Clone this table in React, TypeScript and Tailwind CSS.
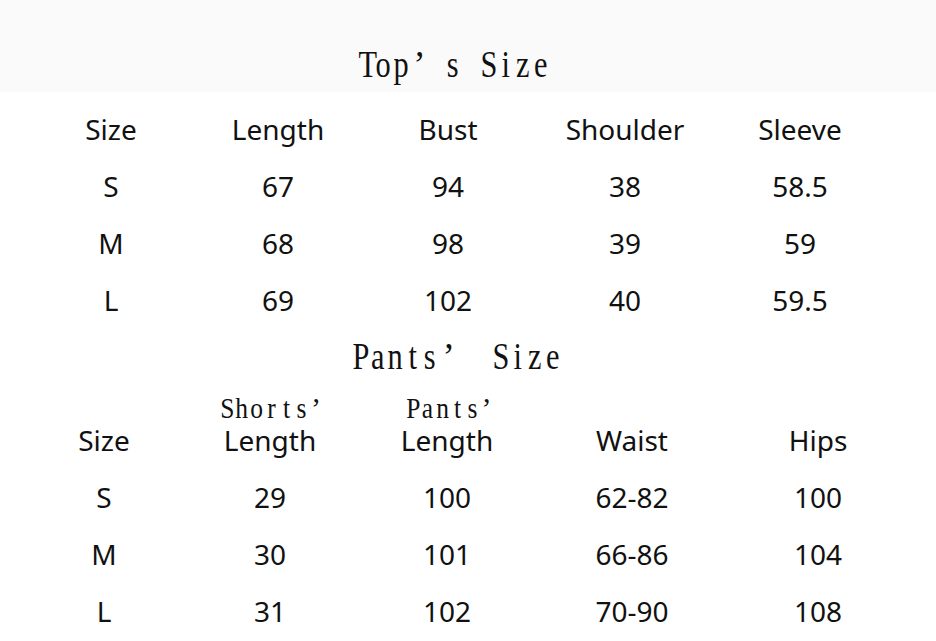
import React from "react";

const serif = { fontFamily: '"Liberation Serif", "DejaVu Serif", serif' };

function Mono({ text, size }: { text: string; size: "lg" | "sm" }) {
  const chars = Array.from(text);
  return (
    <span className="inline-flex whitespace-pre" style={serif}>
      {chars.map((c, i) =>
        size === "lg" ? (
          <span
            key={i}
            className={
              c === "’"
                ? "inline-block w-[35px] text-left pl-[4px]"
                : "inline-block w-[17.5px] text-center scale-x-[0.82]"
            }
          >
            {c}
          </span>
        ) : (
          <span
            key={i}
            className={
              c === "’"
                ? "inline-block w-[12px] text-left pl-[2px]"
                : "inline-block w-[15px] text-center scale-x-[0.85]"
            }
          >
            {c}
          </span>
        )
      )}
    </span>
  );
}

const topRows = [
  ["Size", "Length", "Bust", "Shoulder", "Sleeve"],
  ["S", "67", "94", "38", "58.5"],
  ["M", "68", "98", "39", "59"],
  ["L", "69", "102", "40", "59.5"],
];

const pantsRows = [
  ["S", "29", "100", "62-82", "100"],
  ["M", "30", "101", "66-86", "104"],
  ["L", "31", "102", "70-90", "108"],
];

export default function App() {
  return (
    <div
      className="w-[936px] h-[641px] bg-white text-[#111] overflow-hidden flex flex-col"
      style={{ fontFamily: '"Noto Sans", "Open Sans", sans-serif' }}
    >
      {/* Top title band */}
      <div className="h-[92px] bg-[#fbfafa] flex items-end justify-center pb-[9px] pr-[30px]">
        <div className="text-[37px] leading-[36px]">
          <Mono text="Top’s Size" size="lg" />
        </div>
      </div>

      {/* Top table */}
      <div className="mt-[9px] pl-[26px] flex flex-col">
        {topRows.map((row, r) => (
          <div
            key={r}
            className="grid grid-cols-[170px_164px_176px_178px_172px] h-[57px] text-[28px] leading-[57px]"
          >
            {row.map((cell, c) => (
              <div key={c} className="text-center">
                {cell}
              </div>
            ))}
          </div>
        ))}
      </div>

      {/* Pants title */}
      <div className="mt-[8px] h-[36px] flex justify-center pr-[24px]">
        <div className="text-[37px] leading-[36px]">
          <Mono text="Pants’ Size" size="lg" />
        </div>
      </div>

      {/* Pants header */}
      <div className="mt-[19px] pl-[20px] grid grid-cols-[168px_164px_190px_180px_192px] h-[64px] text-[28px]">
        <div className="flex flex-col justify-end items-center">
          <div className="leading-[34px]">Size</div>
        </div>
        <div className="flex flex-col justify-end items-center">
          <div className="text-[30px] leading-[30px]">
            <Mono text="Shorts’" size="sm" />
          </div>
          <div className="leading-[34px]">Length</div>
        </div>
        <div className="flex flex-col justify-end items-center">
          <div className="text-[30px] leading-[30px] pl-[2px]">
            <Mono text="Pants’" size="sm" />
          </div>
          <div className="leading-[34px]">Length</div>
        </div>
        <div className="flex flex-col justify-end items-center">
          <div className="leading-[34px]">Waist</div>
        </div>
        <div className="flex flex-col justify-end items-center">
          <div className="leading-[34px]">Hips</div>
        </div>
      </div>

      {/* Pants rows */}
      <div className="mt-[13px] pl-[20px] flex flex-col">
        {pantsRows.map((row, r) => (
          <div
            key={r}
            className="grid grid-cols-[168px_164px_190px_180px_192px] h-[57px] text-[28px] leading-[57px]"
          >
            {row.map((cell, c) => (
              <div key={c} className="text-center">
                {cell}
              </div>
            ))}
          </div>
        ))}
      </div>
    </div>
  );
}
